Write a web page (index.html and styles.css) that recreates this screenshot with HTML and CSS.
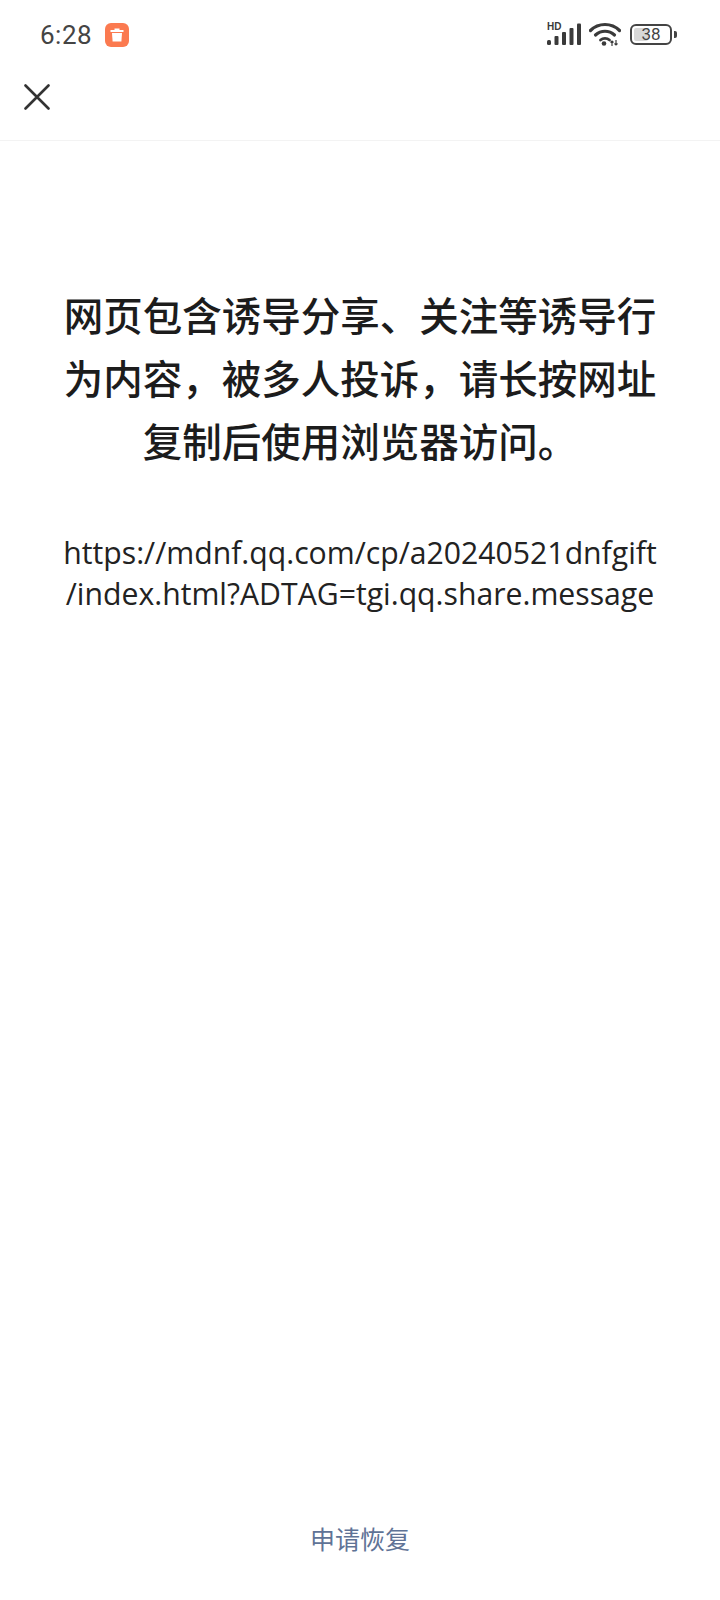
FILE: index.html
```html
<!DOCTYPE html>
<html lang="zh-CN">
<head>
<meta charset="utf-8">
<title>网页</title>
<link rel="stylesheet" href="styles.css">
</head>
<body>
<div class="page">
  <div class="status">
    <div class="status-left">
      <span class="time">6:28</span>
      <span class="app-icon">
        <svg width="24" height="24" viewBox="0 0 24 24"><path d="M9.500 5.500h5v1.600H18.500v2H5.500v-2H9.500z" fill="#fff"/><path d="M7 10h10l-.6 8.500H7.600z" fill="#fff"/></svg>
      </span>
    </div>
    <div class="status-right">
      <svg class="sig" width="36" height="26" viewBox="0 0 36 26">
        <text x="0" y="8.500" class="hd">HD</text>
        <rect x="0" y="19" width="4" height="5" rx="1.500" fill="#3a3a3a"/>
        <rect x="7.500" y="15" width="4" height="9" rx="1" fill="#3a3a3a"/>
        <rect x="15" y="11" width="4" height="13" rx="1" fill="#3a3a3a"/>
        <rect x="22.500" y="7" width="4" height="17" rx="1" fill="#3a3a3a"/>
        <rect x="30" y="2.500" width="4" height="21.500" rx="1" fill="#3a3a3a"/>
      </svg>
      <svg class="wifi" width="32" height="24" viewBox="0 0 32 24">
        <path d="M1.500 8.500C9.500 .5 22.500 .5 30.500 8.500" fill="none" stroke="#3a3a3a" stroke-width="3.200" stroke-linecap="round"/>
        <path d="M6.500 13C12 8 20 8 25.500 13" fill="none" stroke="#3a3a3a" stroke-width="3.200" stroke-linecap="round"/>
        <path d="M11.500 18c2.500-2.200 6.500-2.200 9 0" fill="none" stroke="#3a3a3a" stroke-width="2.800" stroke-linecap="round"/>
        <circle cx="15" cy="21.500" r="2.300" fill="#3a3a3a"/>
        <path d="M23 24v-5M21.500 20.500L23 19l1.500 1.500M27 18v5M25.500 21.500L27 23l1.500-1.500" fill="none" stroke="#3a3a3a" stroke-width="1.200"/>
      </svg>
      <div class="battery">
        <div class="battery-body">
          <span class="battery-fill"></span>
          <span class="battery-num">38</span>
        </div>
        <span class="battery-cap"></span>
      </div>
    </div>
  </div>
  <header class="nav">
    <svg class="close" width="26" height="26" viewBox="0 0 26 26"><path d="M1.500 1.500L24.500 24.500M24.500 1.500L1.500 24.500" stroke="#333" stroke-width="2.600" stroke-linecap="round"/></svg>
  </header>
  <main class="content">
    <h1 class="title">网页包含诱导分享、关注等诱导行<br>为内容，被多人投诉，请长按网址<br>复制后使用浏览器访问。</h1>
    <p class="url">https://mdnf.qq.com/cp/a20240521dnfgift<br>/index.html?ADTAG=tgi.qq.share.message</p>
  </main>
  <a class="restore">申请恢复</a>
</div>
</body>
</html>
```
FILE: styles.css
```css
* { box-sizing: border-box; }
html, body { margin: 0; padding: 0; background: #fff; }
body { font-family: "Noto Sans", "Noto Sans CJK SC", sans-serif; }
.page { width: 720px; height: 1600px; display: flex; flex-direction: column; }
.status { height: 70px; display: flex; justify-content: space-between; align-items: center; padding: 0 43px 2px 40px; }
.status-left { display: flex; align-items: center; gap: 13px; margin-top: 2px; }
.time { font-size: 26px; line-height: 32px; color: #444; font-family: Roboto, sans-serif; letter-spacing: .5px; }
.app-icon { width: 24px; height: 24px; border-radius: 6px; background: #fb7a50; display: flex; }
.status-right { display: flex; align-items: center; gap: 6px; }
.sig { display: block; }
.hd { font: 700 10px "Liberation Sans", sans-serif; fill: #3a3a3a; }
.wifi { display: block; }
.battery { display: flex; align-items: center; gap: 2px; margin-left: 3px; }
.battery-body { width: 42px; height: 21px; border: 2px solid #444; border-radius: 6px; position: relative; display: flex; align-items: center; justify-content: center; }
.battery-fill { position: absolute; left: 2px; top: 2px; bottom: 2px; width: 14px; background: #d8d8d8; border-radius: 2px; }
.battery-num { position: relative; font-size: 17px; line-height: 17px; color: #444; font-family: Roboto, sans-serif; }
.battery-cap { width: 3px; height: 7px; background: #444; border-radius: 0 2px 2px 0; }
.nav { height: 71px; flex: none; display: flex; align-items: center; padding: 0 0 16px 24px; border-bottom: 1px solid #f3f3f3; }
.close { display: block; }
.content { flex: 1; padding: 141px 40px 0; text-align: center; }
.title { margin: 0; font-size: 39.500px; line-height: 63px; font-weight: 500; color: #1c1c1c; font-family: "Noto Sans CJK SC", sans-serif; }
.url { margin: 61px 0 0; font-size: 30.200px; line-height: 41px; color: #222; white-space: nowrap; font-family: "Open Sans", "Noto Sans", sans-serif; }
.restore { display: block; text-align: center; font-size: 25px; line-height: 32px; color: #5f7396; padding-bottom: 46px; font-family: "Noto Sans CJK SC", sans-serif; }
```
